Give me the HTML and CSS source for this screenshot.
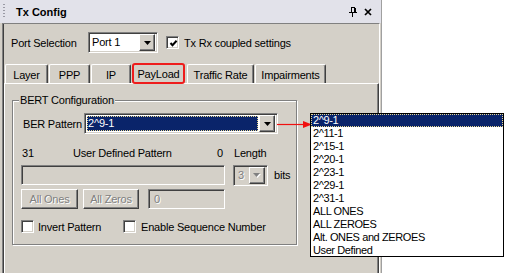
FILE: index.html
```html
<!DOCTYPE html>
<html>
<head>
<meta charset="UTF-8">
<title>Tx Config</title>
<link rel="stylesheet" href="styles.css">
</head>
<body>
<div class="window">
	<div class="panel">
		<div class="titlebar">
			<span class="grip"></span>
			<span class="title">Tx Config</span>
			<span class="tb-icons">
				<svg class="pin" width="8" height="10" viewBox="0 0 8 10" shape-rendering="crispEdges">
					<path d="M2 0h4v1H2z M2 1h1v4H2z M5 1h2v4H5z M0 5h8v1H0z M3 6h1v4H3z" fill="#000"/>
				</svg>
				<svg class="close" width="8" height="8" viewBox="0 0 8 8">
					<path d="M1 1L7 7M7 1L1 7" stroke="#000" stroke-width="1.7"/>
				</svg>
			</span>
		</div>
		<div class="body">
			<div class="port-row">
				<span class="port-label">Port Selection</span>
				<div class="combo port-combo">
					<span class="combo-text">Port 1</span>
					<span class="drop-btn"><svg width="7" height="4" viewBox="0 0 7 4"><path d="M0 0h7L3.5 4z" fill="#000"/></svg></span>
				</div>
				<span class="check">
					<svg width="9" height="9" viewBox="0 0 9 9"><path d="M1.5 4L3.5 6.2L7.6 1.8" stroke="#000" stroke-width="2" fill="none"/></svg>
				</span>
				<span class="check-label">Tx Rx coupled settings</span>
			</div>
			<!-- tabs -->
			<div class="tabs">
				<div class="tab tab-layer">Layer</div>
				<div class="tab tab-ppp">PPP</div>
				<div class="tab tab-ip">IP</div>
				<div class="tab tab-payload selected">PayLoad</div>
				<div class="tab tab-traffic">Traffic Rate</div>
				<div class="tab tab-impair">Impairments</div>
			</div>
			<div class="tab-pane">
				<fieldset class="group">
					<legend>BERT Configuration</legend>
					<div class="ber-row">
						<span class="ber-label">BER Pattern</span>
						<div class="combo ber-combo">
							<span class="combo-text focused">2^9-1</span>
							<span class="drop-btn"><svg width="7" height="4" viewBox="0 0 7 4"><path d="M0 0h7L3.5 4z" fill="#000"/></svg></span>
						</div>
					</div>
					<div class="labels-row">
						<span class="n31">31</span>
						<span class="udp">User Defined Pattern</span>
						<span class="zero">0</span>
						<span class="length">Length</span>
					</div>
					<div class="field-row">
						<div class="field disabled pattern-field"></div>
						<div class="combo len-combo disabled">
							<span class="combo-text">3</span>
							<span class="drop-btn"><svg width="8" height="5" viewBox="0 0 8 5"><path d="M1 1h7L4.5 5z" fill="#fff"/><path d="M0 0h7L3.5 4z" fill="#808080"/></svg></span>
						</div>
						<span class="bits">bits</span>
					</div>
					<div class="btn-row">
						<div class="btn disabled btn-ones">All Ones</div>
						<div class="btn disabled btn-zeros">All Zeros</div>
						<div class="field disabled zero-field">0</div>
					</div>
					<div class="check-row">
						<span class="check empty"></span>
						<span class="check-label invert">Invert Pattern</span>
						<span class="check empty"></span>
						<span class="check-label">Enable Sequence Number</span>
					</div>
				</fieldset>
			</div>
		</div>
	</div>

	<!-- popup list of the BER Pattern combo -->
	<svg class="arrow" width="36" height="11" viewBox="0 0 36 11">
		<path d="M0 5.5H28" stroke="#f01010" stroke-width="1.2"/>
		<path d="M26 2L35 5.5L26 9z" fill="#f01010"/>
	</svg>
	<ul class="drop-list">
		<li class="sel">2^9-1</li>
		<li>2^11-1</li>
		<li>2^15-1</li>
		<li>2^20-1</li>
		<li>2^23-1</li>
		<li>2^29-1</li>
		<li>2^31-1</li>
		<li>ALL ONES</li>
		<li>ALL ZEROES</li>
		<li>Alt. ONES and ZEROES</li>
		<li>User Defined</li>
	</ul>
</div>
</body>
</html>
```

FILE: styles.css
```css
/* Windows classic look */
* {
	box-sizing: border-box;
}

body {
	margin: 0;
	background: #fff;
	font-family: "Liberation Sans", Arial, sans-serif;
	font-size: 11px;
	letter-spacing: -0.2px;
	color: #000;
	white-space: nowrap;
}

.window {
	position: relative;
	width: 506px;
	height: 273px;
	overflow: hidden;
}

.panel {
	width: 382px;
	height: 273px;
	background: #d4d0c8;
	border-right: 1px solid #a0a0a0;
	display: flex;
	flex-direction: column;
}

.titlebar {
	height: 23px;
	background: #e2e2ea;
	display: flex;
	align-items: center;
	padding-left: 3px;
}

.grip {
	width: 2px;
	height: 15px;
	background: repeating-linear-gradient(to bottom, #9a9aa4 0 1px, transparent 1px 3px);
}

.title {
	margin-left: 11px;
	font-weight: bold;
	letter-spacing: 0;
}

.tb-icons {
	margin-left: auto;
	margin-right: 9px;
	display: flex;
	align-items: center;
	gap: 7px;
}

.body {
	flex: 1;
	margin-left: 2px;
	margin-right: 1px;
	border-left: 1px solid #808080;
	border-top: 1px solid #808080;
	border-right: 1px solid #fff;
	box-shadow: inset 1px 0 #404040;
	display: flex;
	flex-direction: column;
}

/* sunken / raised edges */
.combo,
.field,
.check {
	border: 1px solid;
	border-color: #808080 #fff #fff #808080;
	box-shadow: inset 1px 1px #404040, inset -1px -1px #d4d0c8;
	background: #fff;
}

.btn,
.drop-btn {
	border: 1px solid;
	border-color: #fff #404040 #404040 #fff;
	box-shadow: inset -1px -1px #808080;
	background: #d4d0c8;
}

.port-row {
	margin-top: 8px;
	height: 21px;
	padding-left: 8px;
	display: flex;
	align-items: center;
}

.port-label {
	width: 77px;
}

.combo {
	display: flex;
	align-items: center;
	padding: 2px;
}

.combo-text {
	flex: 1;
	padding-left: 1px;
	line-height: 15px;
}

.drop-btn {
	width: 16px;
	height: 17px;
	display: flex;
	align-items: center;
	justify-content: center;
}

.port-combo {
	width: 70px;
	height: 21px;
}

.check {
	width: 13px;
	height: 13px;
	display: flex;
	align-items: center;
	justify-content: center;
	padding-top: 1px;
	padding-left: 1px;
}

.port-row .check {
	margin-left: 8px;
}

.check-label {
	margin-left: 5px;
}

/* tabs */
.tabs {
	margin-top: 9px;
	height: 21px;
	padding-left: 2px;
	display: flex;
	align-items: flex-end;
}

.tab {
	height: 19px;
	margin-right: 1px;
	border: 1px solid;
	border-bottom: none;
	border-color: #fff #404040 transparent #fff;
	border-radius: 2px 2px 0 0;
	box-shadow: inset -1px 0 #808080;
	display: flex;
	align-items: center;
	justify-content: center;
	padding-top: 1px;
}

.tab-layer { width: 43px; }
.tab-ppp { width: 41px; }
.tab-ip { width: 40px; }
.tab-traffic { width: 67px; }
.tab-impair { width: 71px; }

.tab.selected {
	width: 53px;
	height: 21px;
	margin-right: 2px;
	margin-bottom: -1px;
	border: 2px solid #ee1c1c;
	border-radius: 3px;
	box-shadow: none;
	background: #d4d0c8;
	position: relative;
	padding-top: 0;
}

.tab-pane {
	flex: 1;
	margin-left: 1px;
	border-top: 1px solid #fff;
	border-left: 1px solid #fff;
	border-right: 1px solid #404040;
	box-shadow: inset -1px 0 #808080;
	padding: 10px 0 0 7px;
}

/* group box */
.group {
	margin: 0;
	width: 285px;
	height: 151px;
	padding: 6px 0 0 8px;
	border: 1px solid #808080;
	box-shadow: inset 1px 1px #fff, 1px 1px #fff;
}

.group legend {
	margin-left: -2px;
	padding: 0 1px;
	line-height: 13px;
	background: #d4d0c8;
}

.ber-row {
	height: 21px;
	display: flex;
	align-items: center;
}

.ber-label {
	width: 63px;
	padding-left: 2px;
}

.ber-combo {
	width: 194px;
	height: 21px;
}

.combo-text.focused {
	background: #0a246a;
	color: #fff;
	outline: 1px dotted #e8d890;
	outline-offset: -1px;
	margin-right: 1px;
}

.labels-row {
	margin-top: 13px;
	height: 13px;
	line-height: 13px;
	display: flex;
}

.n31 { width: 52px; padding-left: 1px; }
.udp { width: 144px; }
.zero { width: 17px; }

.field-row {
	margin-top: 5px;
	height: 20px;
	display: flex;
	align-items: center;
}

.field.disabled,
.combo.disabled {
	background: #d4d0c8;
}

.pattern-field {
	width: 204px;
	height: 20px;
}

.len-combo {
	margin-left: 8px;
	width: 35px;
	height: 21px;
}

.disabled,
.disabled .combo-text {
	color: #808080;
	text-shadow: 1px 1px #fff;
}

.len-combo .combo-text {
	padding-left: 2px;
}

.bits {
	margin-left: 6px;
}

.btn-row {
	margin-top: 4px;
	height: 20px;
	display: flex;
}

.btn {
	height: 20px;
	display: flex;
	align-items: center;
	justify-content: center;
}

.btn-ones { width: 57px; }

.btn-zeros {
	width: 56px;
	margin-left: 5px;
}

.zero-field {
	width: 77px;
	height: 20px;
	margin-left: 9px;
	padding: 3px 0 0 5px;
}

.check-row {
	margin-top: 11px;
	height: 13px;
	display: flex;
	align-items: center;
}

.check-label.invert {
	width: 85px;
	margin-left: 4px;
}

/* popup list */
.arrow {
	position: absolute;
	left: 277px;
	top: 119px;
}

.drop-list {
	position: absolute;
	left: 310px;
	top: 113px;
	width: 194px;
	height: 144px;
	margin: 0;
	padding: 0;
	list-style: none;
	background: #fff;
	border: 1px solid #000;
	letter-spacing: -0.4px;
}

.drop-list li {
	height: 13px;
	line-height: 13px;
	padding-left: 2px;
}

.drop-list li.sel {
	background: #0a246a;
	color: #fff;
	outline: 1px dotted #e8d890;
	outline-offset: -1px;
}
```
